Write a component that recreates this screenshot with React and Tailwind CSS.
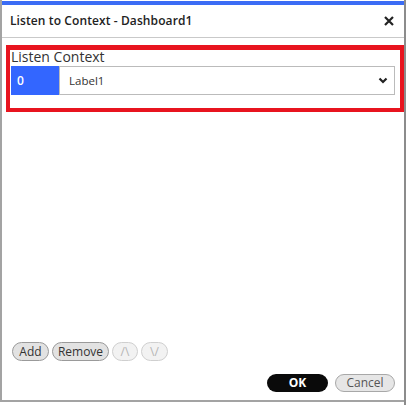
import React from "react";

const App = () => {
  return (
    <div className="w-[406px] h-[408px] bg-white flex items-start font-['Open_Sans',sans-serif] text-[#333]">
      <div className="w-[404px] h-[402px] bg-white border-l-2 border-b-2 border-[#a3a3a3] flex flex-col">
        <div className="h-[4px] mt-px bg-[#3b6cf5]"></div>

        {/* header */}
        <div className="h-[33px] flex items-center justify-between pl-2 pr-[10px] border-b border-[#c9c9c9]">
          <span className="text-[12px] font-semibold text-[#222] tracking-[0.1px]">Listen to Context - Dashboard1</span>
          <svg width="10" height="10" viewBox="0 0 10 10" className="text-[#222]">
            <path d="M1 1 L9 9 M9 1 L1 9" stroke="currentColor" strokeWidth="2.2" />
          </svg>
        </div>

        {/* body */}
        <div className="flex-1 flex flex-col pl-1 pt-[7px]">
          <div className="h-[67px] border-4 border-t-[5px] border-[#e8141f] pl-px pr-[5px] flex flex-col">
            <div className="text-[14px] leading-[16px] text-[#333] -mt-px">Listen Context</div>
            <div className="mt-[1px] h-[29px] flex">
              <div className="w-[48px] bg-[#3366ff] text-white text-[12px] font-semibold flex items-center pl-[6px]">0</div>
              <div className="flex-1 border border-[#bbbbbb] flex items-center justify-between pl-[9px] pr-[6px]">
                <span className="text-[11.5px] text-[#333]">Label1</span>
                <svg width="10" height="7" viewBox="0 0 10 7">
                  <path d="M1.5 1.5 L5 5 L8.5 1.5" stroke="#222" strokeWidth="2.2" fill="none" />
                </svg>
              </div>
            </div>
          </div>
          <div className="flex-1"></div>

          {/* list buttons */}
          <div className="flex items-center gap-[3px] pl-[6px] h-[19px]">
            <button className="h-[19px] w-[37px] rounded-full border border-[#9a9a9a] bg-[#e2e2e2] text-[12px] leading-none text-[#333]">Add</button>
            <button className="h-[19px] w-[57px] rounded-full border border-[#9a9a9a] bg-[#e2e2e2] text-[12px] leading-none text-[#333]">Remove</button>
            <button className="h-[19px] w-[26px] rounded-full border border-[#cfcfcf] bg-[#f2f2f2] text-[12px] leading-none text-[#b5b5b5]">/\</button>
            <button className="h-[19px] w-[27px] rounded-full border border-[#cfcfcf] bg-[#f2f2f2] text-[12px] leading-none text-[#b5b5b5]">\/</button>
          </div>

          {/* footer */}
          <div className="flex justify-end items-center gap-[7px] pr-[9px] mt-[13px] mb-[8px] h-[18px]">
            <button className="h-[18px] w-[61px] rounded-full bg-[#0a0a0a] text-white text-[12px] font-bold leading-none">OK</button>
            <button className="h-[18px] w-[60px] rounded-full border border-[#a8a8a8] bg-[#e6e6e6] text-[12px] leading-none text-[#555]">Cancel</button>
          </div>
        </div>
      </div>
      <div className="w-[2px] h-[405px] bg-[#8c8c8c]"></div>
    </div>
  );
};

export default App;
